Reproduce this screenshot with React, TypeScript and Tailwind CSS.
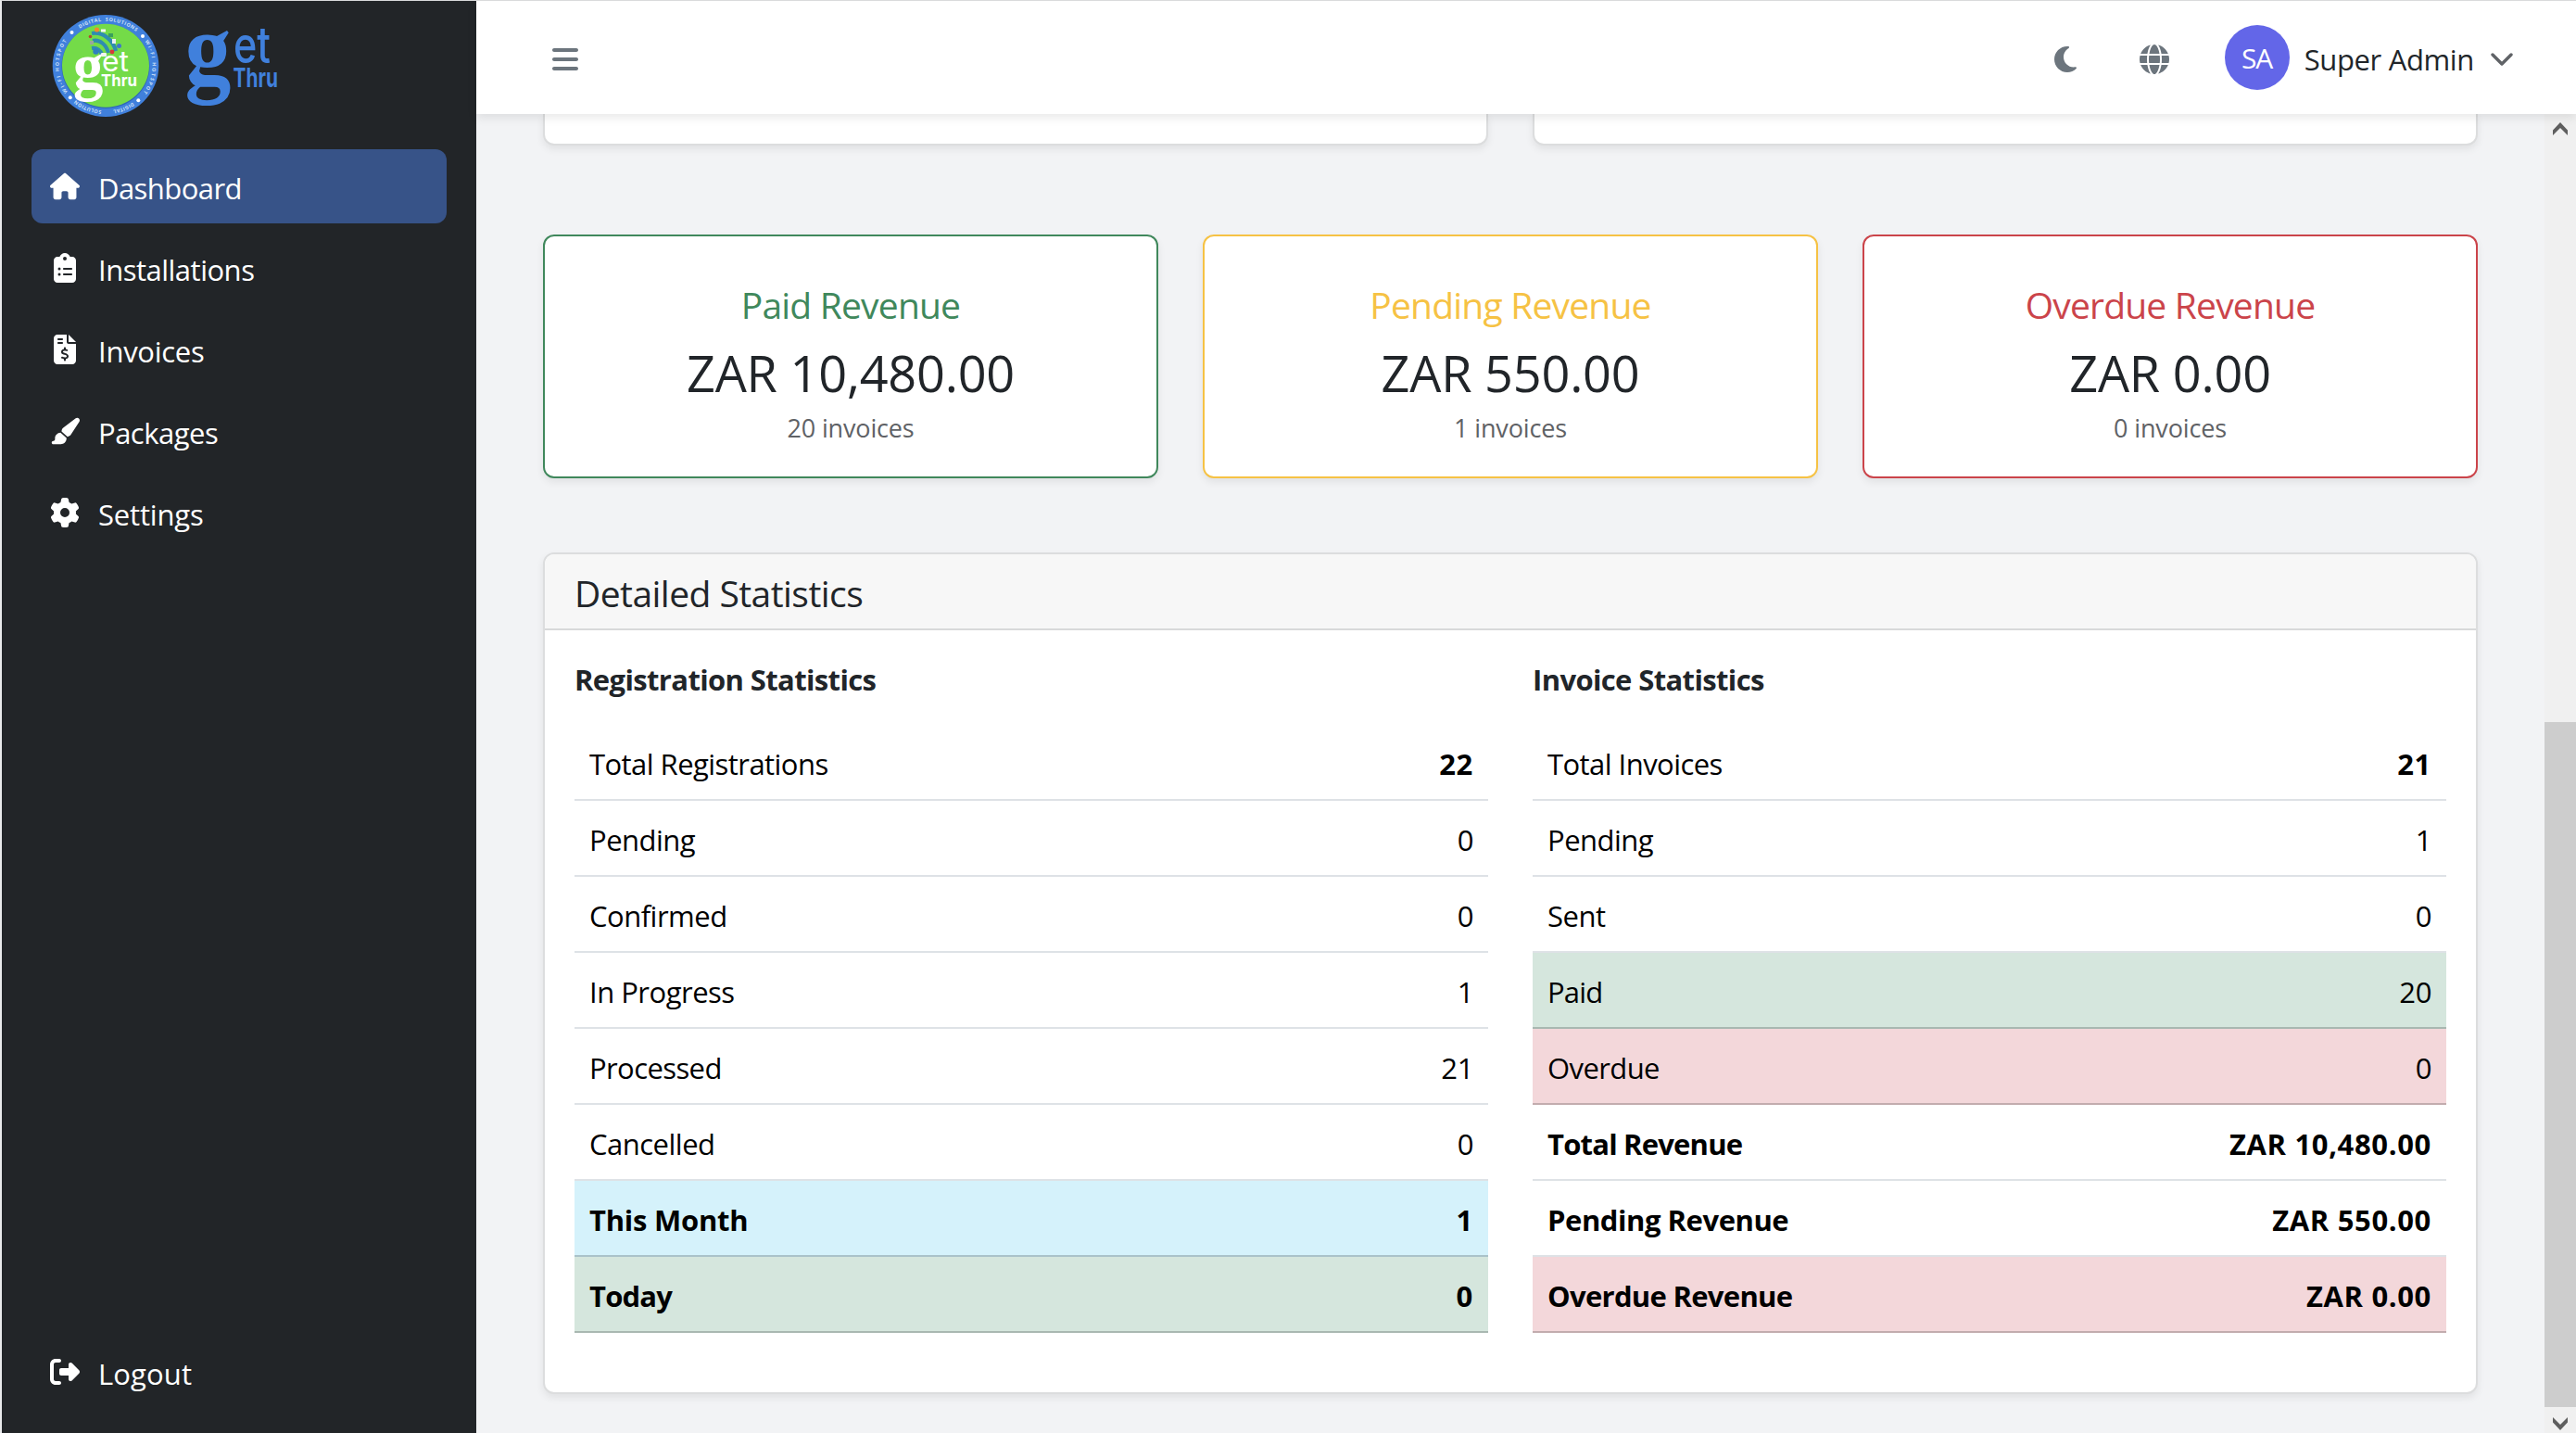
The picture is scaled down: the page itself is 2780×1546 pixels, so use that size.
import type { ReactNode } from "react";
import {
  FaBars,
  FaClipboardList,
  FaFileInvoiceDollar,
  FaGear,
  FaGlobe,
  FaHouse,
  FaMoon,
  FaPaintbrush,
  FaRightFromBracket,
} from "react-icons/fa6";

type NavEntry = { label: string; icon: ReactNode; tracking: string; active?: boolean };

const NAV: NavEntry[] = [
  { label: "Dashboard", icon: <FaHouse />, tracking: "tracking-[-0.55px]", active: true },
  { label: "Installations", icon: <FaClipboardList />, tracking: "tracking-[-0.5px]" },
  { label: "Invoices", icon: <FaFileInvoiceDollar />, tracking: "tracking-[-0.27px]" },
  { label: "Packages", icon: <FaPaintbrush />, tracking: "tracking-[-0.5px]" },
  { label: "Settings", icon: <FaGear />, tracking: "tracking-[-0.17px]" },
];

function NavItem({ label, icon, tracking, active }: NavEntry) {
  return (
    <a
      className={`flex h-20 items-center rounded-xl px-4 text-white ${active ? "bg-[#375388]" : ""}`}
    >
      <span className="flex w-10 justify-center text-[32px]">{icon}</span>
      <span className={`ml-4 pt-1 text-[31px] leading-[48px] ${tracking}`}>{label}</span>
    </a>
  );
}

function BadgeLogo() {
  return (
    <svg viewBox="0 0 116 112" className="h-[112px] w-[116px] overflow-visible">
      <defs>
        <path id="ring" d="M 58 104.3 A 50.5 48.3 0 1 1 58.1 104.3" />
      </defs>
      <ellipse cx="58" cy="56" rx="57.3" ry="55" fill="#4080dc" />
      <ellipse cx="58" cy="56.5" rx="47.5" ry="45.5" fill="#2f66b8" />
      <ellipse cx="58" cy="55.8" rx="47" ry="45" fill="#74db48" />
      <g fill="#cfe0f8" fontFamily="Open Sans, sans-serif" fontWeight="700" fontSize="5.3">
        <text letterSpacing="0.4">
          <textPath href="#ring" startOffset="1.5%">SOLUTION</textPath>
        </text>
        <text letterSpacing="1.6">
          <textPath href="#ring" startOffset="15.2%">WI-FI HOTSPOT</textPath>
        </text>
        <text letterSpacing="0.6">
          <textPath href="#ring" startOffset="40.5%">DIGITAL&#160;&#160;SOLUTIONS</textPath>
        </text>
        <text letterSpacing="1.6">
          <textPath href="#ring" startOffset="66%">WI-FI HOTSPOT</textPath>
        </text>
        <text letterSpacing="0.3">
          <textPath href="#ring" startOffset="90%">DIGITAL</textPath>
        </text>
      </g>
      <g fill="#fff">
        <circle cx="21.5" cy="20" r="2" />
        <circle cx="98" cy="24" r="2" />
        <circle cx="19.8" cy="90.3" r="2" />
        <circle cx="93.3" cy="93.3" r="2" />
      </g>
      <g fill="none" stroke="#2f8cb0" strokeWidth="4.2">
        <path d="M43 21 C55 19 66 28 69 40" />
        <path d="M44 29 C52 27 59 34 61 42" />
        <path d="M43 37 C49 36 53 40 54 44" />
      </g>
      <circle cx="47.5" cy="40.5" r="3.2" fill="#2f7fc0" />
      <circle cx="48.5" cy="17" r="2.6" fill="#f08a2c" />
      <rect x="53" y="16.5" width="5" height="3" fill="#f4f8f4" />
      <rect x="61" y="21" width="5" height="4" fill="#3aa05c" />
      <rect x="65" y="27" width="4" height="5" fill="#e8eef0" />
      <circle cx="72.5" cy="34.5" r="2.5" fill="#3f78c8" />
      <circle cx="65" cy="41" r="2.4" fill="#d83a3a" />
      <circle cx="41.5" cy="24.5" r="1.8" fill="#b5482f" />
      <rect x="41" y="29" width="4" height="4" fill="#9aa79a" />
      <rect x="53" y="42" width="6" height="4" rx="1" fill="#f0f4f0" />
      <g fill="#fff">
        <text
          transform="translate(23 80) scale(1.2 1.3)"
          fontFamily="Liberation Serif, serif"
          fontWeight="700"
          fontSize="54"
        >
          g
        </text>
        <text x="54" y="61.7" fontFamily="Inter, sans-serif" fontSize="30" textLength="29" lengthAdjust="spacingAndGlyphs">
          et
        </text>
        <text x="53" y="77.7" fontFamily="Inter, sans-serif" fontWeight="700" fontSize="17.5" textLength="39" lengthAdjust="spacingAndGlyphs">
          Thru
        </text>
      </g>
    </svg>
  );
}

function WordLogo() {
  return (
    <svg viewBox="0 0 100 90" className="h-[90px] w-[100px] overflow-visible" fill="#4080dc">
      <text
        transform="translate(-1.5 61) scale(1.16 1.27)"
        fontFamily="Liberation Serif, serif"
        fontWeight="700"
        fontSize="86"
      >
        g
      </text>
      <text x="51" y="38.7" fontFamily="Inter, sans-serif" fontWeight="500" fontSize="54" textLength="40" lengthAdjust="spacingAndGlyphs">
        et
      </text>
      <text x="50.5" y="64.7" fontFamily="Inter, sans-serif" fontWeight="700" fontSize="29" textLength="48.5" lengthAdjust="spacingAndGlyphs">
        Thru
      </text>
    </svg>
  );
}

function Sidebar() {
  return (
    <aside className="flex w-[512px] shrink-0 flex-col bg-[#222528] px-8 pb-[26px] pt-[14px]">
      <div className="mb-[34px] flex h-[112px] pl-[22px]">
        <BadgeLogo />
        <div className="ml-[29px] mt-[14px]">
          <WordLogo />
        </div>
      </div>
      <nav className="flex flex-1 flex-col gap-2">
        {NAV.map((item) => (
          <NavItem key={item.label} {...item} />
        ))}
      </nav>
      <NavItem label="Logout" icon={<FaRightFromBracket />} tracking="tracking-[0.14px]" />
    </aside>
  );
}

function Header() {
  return (
    <header className="relative z-10 flex h-[122px] shrink-0 items-center bg-white pl-20 pr-[68px] pt-[4px] text-[#6c757d] shadow-[0_4px_10px_rgba(0,0,0,0.09)]">
      <FaBars className="text-[32px]" />
      <div className="flex-1" />
      <FaMoon className="text-[32px]" />
      <FaGlobe className="ml-[64px] text-[32px]" />
      <div className="mb-1 ml-[60px] flex h-[70px] w-[70px] items-center justify-center rounded-full bg-[#6366e8] text-[30px] tracking-[-1px] text-white">
        SA
      </div>
      <span className="ml-[16px] pt-[1px] text-[31px] tracking-[-0.35px] text-[#212529]">Super Admin</span>
      <svg viewBox="0 0 24 14" className="ml-[18px] h-[14px] w-[24px]" fill="none">
        <path
          d="M2 2 L12 12 L22 2"
          stroke="#606367"
          strokeWidth="3.4"
          strokeLinecap="round"
          strokeLinejoin="round"
        />
      </svg>
    </header>
  );
}

type Revenue = {
  title: string;
  amount: string;
  count: string;
  border: string;
  text: string;
};

const REVENUE: Revenue[] = [
  { title: "Paid Revenue", amount: "ZAR 10,480.00", count: "20 invoices", border: "border-[#40885c]", text: "text-[#40885c]" },
  { title: "Pending Revenue", amount: "ZAR 550.00", count: "1 invoices", border: "border-[#f6c244]", text: "text-[#f6c244]" },
  { title: "Overdue Revenue", amount: "ZAR 0.00", count: "0 invoices", border: "border-[#cb444a]", text: "text-[#cb444a]" },
];

function RevenueCard({ title, amount, count, border, text }: Revenue) {
  return (
    <div
      className={`flex h-[263px] flex-col items-center rounded-xl border-2 bg-white pt-[50px] shadow-[0_4px_8px_rgba(0,0,0,0.075)] ${border}`}
    >
      <h5 className={`text-[39px] leading-[48px] tracking-[-0.8px] ${text}`}>{title}</h5>
      <h3 className="mt-4 text-[54px] leading-[67px] tracking-[-0.2px] text-[#212529]">{amount}</h3>
      <p className="pt-0.5 text-[27px] leading-[48px] tracking-[-0.15px] text-[#5f6266]">{count}</p>
    </div>
  );
}

type Tone = "plain" | "green" | "red" | "blue";
type Row = { label: string; value: string; bold?: "all" | "value"; tone?: Tone; tracking?: string };

const TONES: Record<Tone, string> = {
  plain: "border-[#dee2e6]",
  green: "bg-[#d5e6dd] border-[#a9b8b1]",
  red: "bg-[#f3d7da] border-[#c2acae]",
  blue: "bg-[#d5f2fb] border-[#aac2c9]",
};

const REGISTRATIONS: Row[] = [
  { label: "Total Registrations", value: "22", bold: "value", tracking: "tracking-[-0.55px]" },
  { label: "Pending", value: "0" },
  { label: "Confirmed", value: "0" },
  { label: "In Progress", value: "1" },
  { label: "Processed", value: "21", tracking: "tracking-[-0.6px]" },
  { label: "Cancelled", value: "0" },
  { label: "This Month", value: "1", bold: "all", tone: "blue", tracking: "tracking-[-0.25px]" },
  { label: "Today", value: "0", bold: "all", tone: "green" },
];

const INVOICES: Row[] = [
  { label: "Total Invoices", value: "21", bold: "value", tracking: "tracking-[-0.55px]" },
  { label: "Pending", value: "1" },
  { label: "Sent", value: "0" },
  { label: "Paid", value: "20", tone: "green", tracking: "tracking-[-0.8px]" },
  { label: "Overdue", value: "0", tone: "red", tracking: "tracking-[-0.6px]" },
  { label: "Total Revenue", value: "ZAR 10,480.00", bold: "all" },
  { label: "Pending Revenue", value: "ZAR 550.00", bold: "all", tracking: "tracking-[-0.45px]" },
  { label: "Overdue Revenue", value: "ZAR 0.00", bold: "all", tone: "red", tracking: "tracking-[-0.7px]" },
];

function StatRow({ label, value, bold, tone = "plain", tracking }: Row) {
  const labelTracking = tracking ?? (bold === "all" ? "tracking-[-0.8px]" : "tracking-[-0.5px]");
  return (
    <div
      className={`flex h-[82px] justify-between border-b-2 px-4 pt-[18px] text-[31px] leading-[48px] text-black ${TONES[tone]}`}
    >
      <span className={`${labelTracking} ${bold === "all" ? "font-bold" : ""}`}>{label}</span>
      <span className={bold ? "font-bold tracking-[0.65px]" : "tracking-[-0.4px]"}>{value}</span>
    </div>
  );
}

function StatTable({ title, rows }: { title: string; rows: Row[] }) {
  return (
    <section>
      <h6 className="mb-[30px] pt-[3px] text-[31px] font-bold leading-[37px] tracking-[-0.63px] text-[#212529]">
        {title}
      </h6>
      {rows.map((row) => (
        <StatRow key={row.label} {...row} />
      ))}
    </section>
  );
}

function Scrollbar() {
  return (
    <div className="flex w-[34px] shrink-0 flex-col items-center bg-[#f0f0f0]">
      <svg viewBox="0 0 16 14" className="mt-[9px] h-[14px] w-4 shrink-0" fill="#5e5e5e">
        <path d="M0 8.5 L8 0 L16 8.5 V14 L8 6 L0 14 Z" />
      </svg>
      <div className="mt-[633px] w-full flex-1 bg-[#cdcdcd]" />
      <svg viewBox="0 0 16 14" className="mb-[3px] mt-[11px] h-[14px] w-4 shrink-0" fill="#5e5e5e">
        <path d="M0 5.5 L8 14 L16 5.5 V0 L8 8 L0 0 Z" />
      </svg>
    </div>
  );
}

export default function App() {
  return (
    <div className="flex h-[1546px] w-[2780px] overflow-hidden border-l-2 border-t border-l-[#e9eaeb] border-t-[#d9dadb] bg-[#f2f3f5] font-['Open_Sans',sans-serif]">
      <Sidebar />
      <div className="flex min-w-0 flex-1 flex-col">
        <Header />
        <div className="flex min-h-0 flex-1">
          <main className="min-w-0 flex-1 overflow-hidden px-[72px]">
            <div className="grid h-[34px] grid-cols-2 gap-12">
              <div className="rounded-b-xl border-2 border-t-0 border-[#dcddde] bg-white shadow-[0_4px_8px_rgba(0,0,0,0.075)]" />
              <div className="rounded-b-xl border-2 border-t-0 border-[#dcddde] bg-white shadow-[0_4px_8px_rgba(0,0,0,0.075)]" />
            </div>
            <div className="mt-24 grid grid-cols-3 gap-12">
              {REVENUE.map((card) => (
                <RevenueCard key={card.title} {...card} />
              ))}
            </div>
            <div className="mt-20 h-[908px] rounded-xl border-2 border-[#dcddde] bg-white shadow-[0_4px_8px_rgba(0,0,0,0.075)]">
              <div className="h-[82px] rounded-t-[10px] border-b-2 border-[#d8d9da] bg-[#f7f7f7] px-8 pt-[18px]">
                <h5 className="text-[39px] leading-[48px] tracking-[-0.55px] text-[#212529]">Detailed Statistics</h5>
              </div>
              <div className="grid grid-cols-2 gap-12 px-8 pt-8">
                <StatTable title="Registration Statistics" rows={REGISTRATIONS} />
                <StatTable title="Invoice Statistics" rows={INVOICES} />
              </div>
            </div>
          </main>
          <Scrollbar />
        </div>
      </div>
    </div>
  );
}
